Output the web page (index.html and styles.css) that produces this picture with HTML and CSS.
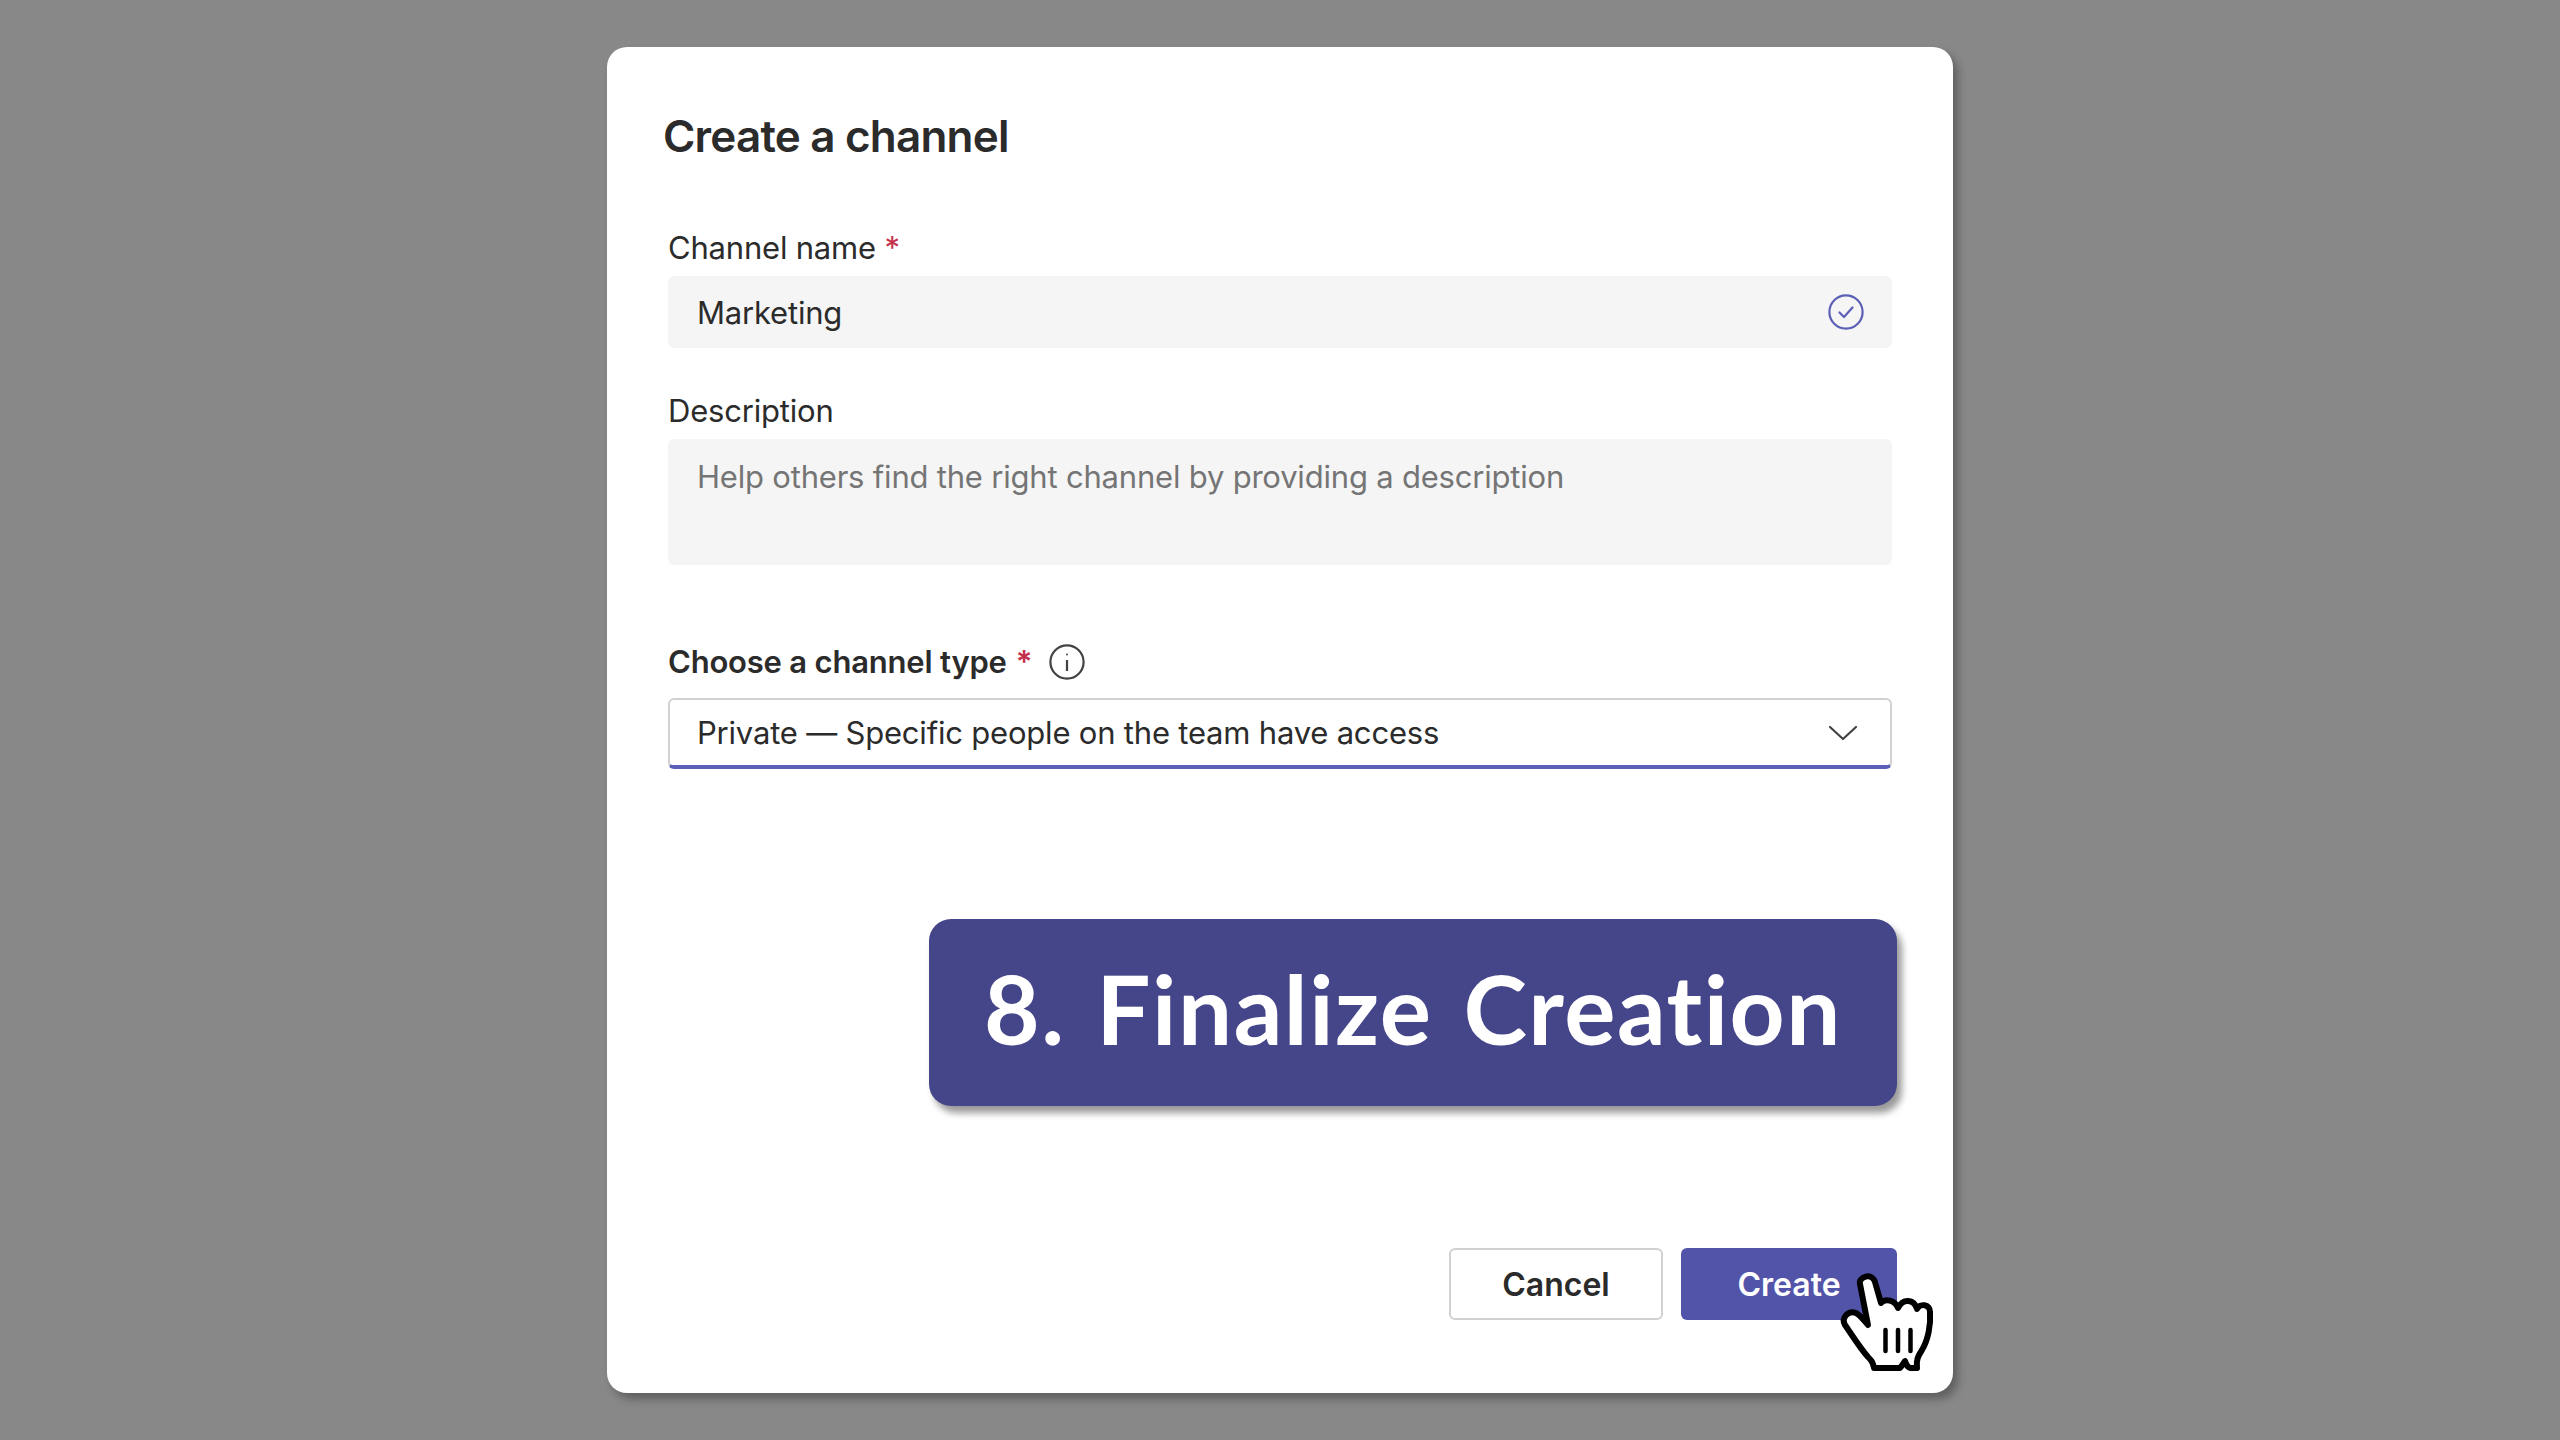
FILE: index.html
```html
<!DOCTYPE html>
<html lang="en">
<head>
    <meta charset="UTF-8">
    <meta name="viewport" content="width=device-width, initial-scale=1.0">
    <title>Create a channel</title>
    <link rel="stylesheet" href="styles.css">
</head>
<body>
    <div class="modal">
        <h1 class="title">Create a channel</h1>

        <div class="field">
            <div class="label">Channel name <span class="req">*</span></div>
            <div class="input">
                <span>Marketing</span>
                <svg class="check" width="36" height="36" viewBox="0 0 36 36" fill="none" stroke="#5b5fb5" stroke-width="2.2">
                    <circle cx="18" cy="18" r="16.6"/>
                    <path d="M11.5 18.5l4.5 4.5 8.5-9.5" stroke-linecap="round" stroke-linejoin="round"/>
                </svg>
            </div>
        </div>

        <div class="field">
            <div class="label">Description</div>
            <div class="input textarea">Help others find the right channel by providing a description</div>
        </div>

        <div class="field type-field">
            <div class="label label-strong">
                Choose a channel type <span class="req">*</span>
                <svg class="info" width="36" height="36" viewBox="0 0 36 36" fill="none" stroke="#424242" stroke-width="2.2">
                    <circle cx="18" cy="18" r="16.6"/>
                    <path d="M18 16v11"/>
                    <circle cx="18" cy="10.5" r="1" fill="#424242" stroke="none"/>
                </svg>
            </div>
            <div class="select">
                <span>Private — Specific people on the team have access</span>
                <svg width="30" height="16" viewBox="0 0 30 16" fill="none" stroke="#424242" stroke-width="2.2">
                    <path d="M2 2l13 12L28 2" stroke-linecap="round" stroke-linejoin="round"/>
                </svg>
            </div>
        </div>

        <div class="footer">
            <div class="btn btn-cancel">Cancel</div>
            <div class="btn btn-create">Create</div>
        </div>

        <div class="banner">8. Finalize Creation</div>

        <!-- hand pointer over the Create button -->
        <svg class="hand" width="160" height="160" viewBox="0 0 160 160">
            <path d="M60 44C58 37 72 32 75 42L81 63C85 58 95 60 98 68C103 58 114 59 117 69C120 63 130 64 130 72C131 85 128 100 122 110C118 116 116 120 117 128L110 128C107 127 106 124 105 121C103 124 102 126 100 128L74 128C73 122 71 120 68 117C60 108 52 95 45 85C41 78 48 70 56 73C60 75 64 80 68 85Z" fill="#fff" stroke="#000" stroke-width="6" stroke-linejoin="round"/>
            <path d="M85.5 90v21M98 90v21M110.500 90v21" fill="none" stroke="#000" stroke-width="4.5" stroke-linecap="round"/>
        </svg>
    </div>
</body>
</html>
```
FILE: styles.css
```css
* {
    box-sizing: border-box;
}
body {
    margin: 0;
    height: 1440px;
    background: #888888;
    font-family: Inter, "Liberation Sans", sans-serif;
    color: #2b2b2b;
    display: flex;
    justify-content: center;
    align-items: center;
}
.modal {
    position: relative;
    width: 1346px;
    height: 1346px;
    padding: 61px 61px 73px;
    background: #ffffff;
    border-radius: 20px;
    box-shadow: 5px 6px 8px rgba(0,0,0,0.3);
    display: flex;
    flex-direction: column;
}
.title {
    margin: 0 0 64px -5px;
    font-size: 44px;
    line-height: 56px;
    font-weight: 600;
    letter-spacing: -0.8px;
}
.field {
    margin-bottom: 43px;
}
.label {
    font-size: 31px;
    line-height: 40px;
    letter-spacing: -0.2px;
    margin-bottom: 8px;
}
.label-strong {
    font-weight: 600;
    display: flex;
    align-items: center;
    gap: 9px;
    margin-bottom: 16px;
}
.req {
    color: #c4314b;
}
.info {
    margin-left: 8px;
}
.input {
    height: 72px;
    padding: 2px 30px 0 29px;
    background: #f5f5f5;
    border-radius: 6px;
    font-size: 31px;
    line-height: 40px;
    letter-spacing: -0.2px;
    display: flex;
    align-items: center;
    justify-content: space-between;
}
.check {
    margin-right: -2px;
    margin-top: -2px;
}
.textarea {
    height: 126px;
    padding-top: 18px;
    align-items: flex-start;
    color: #757575;
}
.type-field {
    margin-top: 34px;
}
.select {
    height: 71px;
    padding: 0 32px 0 27px;
    background: #ffffff;
    border: 2px solid #d1d1d1;
    border-bottom: 4px solid #5b5fb5;
    border-radius: 6px;
    font-size: 31px;
    letter-spacing: -0.2px;
    display: flex;
    align-items: center;
    justify-content: space-between;
}
.footer {
    margin-top: auto;
    margin-right: -5px;
    display: flex;
    justify-content: flex-end;
    gap: 18px;
}
.btn {
    height: 72px;
    border-radius: 6px;
    font-size: 32px;
    font-weight: 600;
    display: flex;
    align-items: center;
    justify-content: center;
}
.btn-cancel {
    width: 214px;
    background: #ffffff;
    border: 2px solid #d1d1d1;
}
.btn-create {
    width: 216px;
    background: #5254a9;
    color: #ffffff;
}
.banner {
    position: absolute;
    left: 322px;
    top: 872px;
    width: 968px;
    height: 187px;
    padding-bottom: 10px;
    background: #454689;
    border-radius: 22px;
    box-shadow: 5px 7px 7px rgba(0,0,0,0.4);
    color: #ffffff;
    font-family: Lato, sans-serif;
    font-size: 96px;
    font-weight: 700;
    letter-spacing: 1.5px;
    word-spacing: 6px;
    font-variant-ligatures: none;
    display: flex;
    align-items: center;
    justify-content: center;
}
.hand {
    position: absolute;
    left: 1193px;
    top: 1193px;
}
```
